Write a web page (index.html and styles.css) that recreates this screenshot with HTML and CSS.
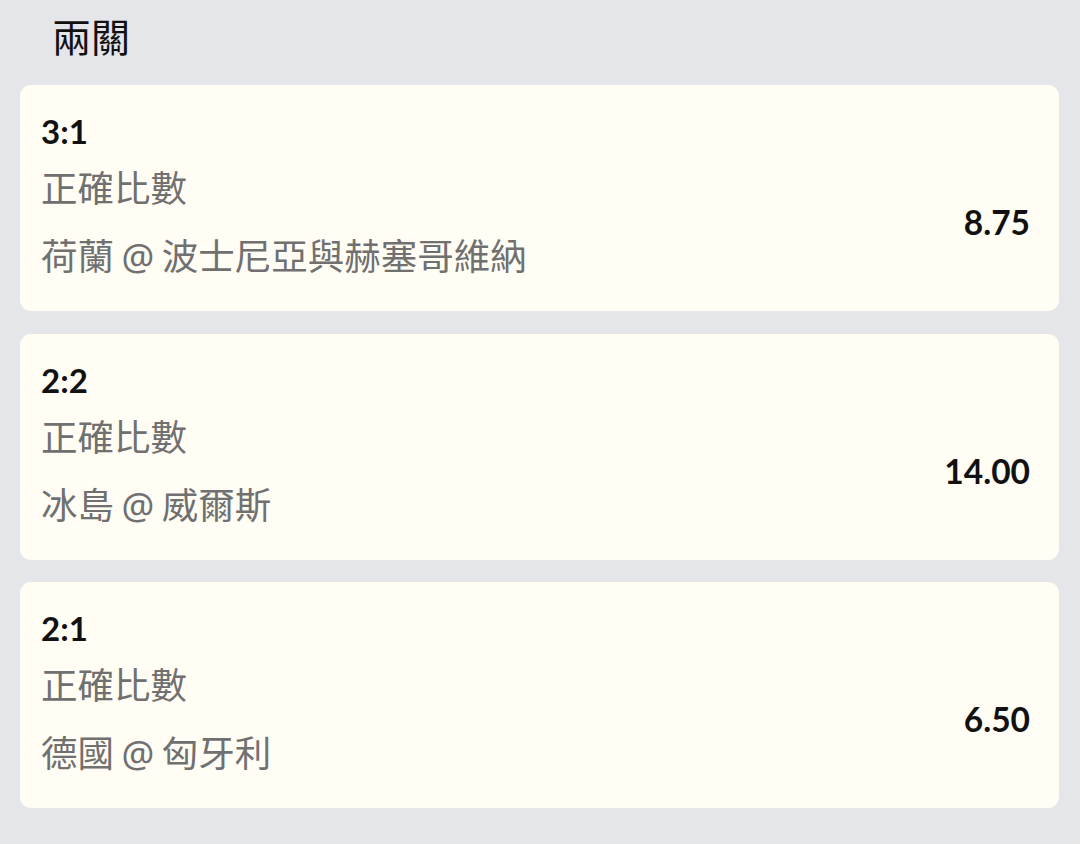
FILE: index.html
```html
<!DOCTYPE html>
<html lang="zh-Hant">
<head>
<meta charset="utf-8">
<link rel="stylesheet" href="styles.css">
</head>
<body>
<div class="page">
  <h1 class="heading">兩關</h1>
  <div class="list">
    <div class="card">
      <div class="score">3:1</div>
      <div class="row">
        <div class="info">
          <div class="line">正確比數</div>
          <div class="line">荷蘭 @ 波士尼亞與赫塞哥維納</div>
        </div>
        <div class="odds">8.75</div>
      </div>
    </div>
    <div class="card">
      <div class="score">2:2</div>
      <div class="row">
        <div class="info">
          <div class="line">正確比數</div>
          <div class="line">冰島 @ 威爾斯</div>
        </div>
        <div class="odds">14.00</div>
      </div>
    </div>
    <div class="card">
      <div class="score">2:1</div>
      <div class="row">
        <div class="info">
          <div class="line">正確比數</div>
          <div class="line">德國 @ 匈牙利</div>
        </div>
        <div class="odds">6.50</div>
      </div>
    </div>
  </div>
</div>
</body>
</html>
```

FILE: styles.css
```css
html, body {
  margin: 0;
  padding: 0;
}
body {
  background: #e5e6ea;
  width: 1080px;
  height: 844px;
  overflow: hidden;
}
.page {
  padding: 0 21px 0 20px;
}
.heading {
  margin: 0 0 14px 0;
  padding-left: 32px;
  font-family: "Noto Sans CJK TC", sans-serif;
  font-weight: 400;
  font-size: 39px;
  line-height: 71px;
  color: #111;
}
.list {
  display: flex;
  flex-direction: column;
  gap: 22.5px;
}
.card {
  background: #fffdf4;
  border-radius: 11px;
  height: 226px;
  box-sizing: border-box;
  padding: 26px 29px 21px 21px;
}
.score {
  font-family: Lato, sans-serif;
  font-weight: 700;
  font-size: 33px;
  line-height: 40px;
  color: #111;
  margin-bottom: 3px;
}
.row {
  display: flex;
  align-items: center;
  justify-content: space-between;
}
.line {
  font-family: "Noto Sans", "Noto Sans CJK TC", sans-serif;
  font-size: 36.5px;
  line-height: 68px;
  word-spacing: -2px;
  color: #707070;
}
.odds {
  font-family: Lato, sans-serif;
  font-weight: 700;
  font-size: 33.5px;
  line-height: 40px;
  color: #111;
}
```
